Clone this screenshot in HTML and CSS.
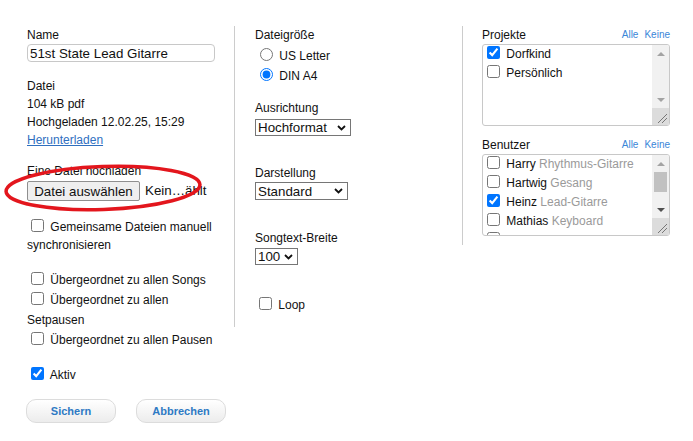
FILE: index.html
```html
<!DOCTYPE html>
<html lang="de">
<head>
    <meta charset="UTF-8">
    <meta name="viewport" content="width=device-width, initial-scale=1.0">
    <title>Datei bearbeiten</title>
    <link rel="stylesheet" href="styles.css">
</head>
<body>
    <div class="page">
        <div class="columns">
            <!-- Datei -->
            <div class="col col-main">
                <div class="label">Name</div>
                <input type="text" class="name-input" value="51st State Lead Gitarre">

                <div class="file-info">
                    <div>Datei</div>
                    <div>104 kB pdf</div>
                    <div>Hochgeladen 12.02.25, 15:29</div>
                    <div><a href="#" class="link">Herunterladen</a></div>
                </div>

                <div class="upload">
                    <div class="label">Eine Datei hochladen</div>
                    <div class="file-row">
                        <button class="file-btn">Datei auswählen</button>
                        <span class="file-name">Kein…ählt</span>
                    </div>
                    <svg class="mark" width="215" height="55" viewBox="0 0 215 55">
                        <ellipse cx="103" cy="28" rx="97" ry="21.5" transform="rotate(-2 103 28)" fill="none" stroke="#e3161d" stroke-width="3.5"/>
                    </svg>
                </div>

                <label class="check-row sync"><input type="checkbox"> Gemeinsame Dateien manuell synchronisieren</label>

                <div class="parent-group">
                    <label class="check-row wide"><input type="checkbox"> Übergeordnet zu allen Songs</label>
                    <label class="check-row wide"><input type="checkbox"> Übergeordnet zu allen Setpausen</label>
                    <label class="check-row wide"><input type="checkbox"> Übergeordnet zu allen Pausen</label>
                </div>
            </div>

            <!-- Druck -->
            <div class="col col-print">
                <div class="label">Dateigröße</div>
                <div class="radios">
                    <label class="radio-row"><input type="radio" name="size"> US Letter</label>
                    <label class="radio-row"><input type="radio" name="size" checked> DIN A4</label>
                </div>

                <div class="label field-gap-1">Ausrichtung</div>
                <div class="sel-wrap sel-orient">
                    <select class="sel">
                        <option>Hochformat</option>
                        <option>Querformat</option>
                    </select>
                    <svg class="chevron" width="9" height="6" viewBox="0 0 9 6"><path d="M1 1 L4.5 4.5 L8 1" fill="none" stroke="#111" stroke-width="1.8"/></svg>
                </div>

                <div class="label field-gap-2">Darstellung</div>
                <div class="sel-wrap sel-view">
                    <select class="sel">
                        <option>Standard</option>
                        <option>Kompakt</option>
                    </select>
                    <svg class="chevron" width="9" height="6" viewBox="0 0 9 6"><path d="M1 1 L4.5 4.5 L8 1" fill="none" stroke="#111" stroke-width="1.8"/></svg>
                </div>

                <div class="label field-gap-3">Songtext-Breite</div>
                <div class="sel-wrap sel-width">
                    <select class="sel">
                        <option>100</option>
                        <option>80</option>
                    </select>
                    <svg class="chevron" width="9" height="6" viewBox="0 0 9 6"><path d="M1 1 L4.5 4.5 L8 1" fill="none" stroke="#111" stroke-width="1.8"/></svg>
                </div>

                <label class="check-row wide loop"><input type="checkbox"> Loop</label>
            </div>

            <!-- Zuordnung -->
            <div class="col col-assign">
                <div class="list-head">
                    <span>Projekte</span>
                    <span class="quick"><a href="#">Alle</a><a href="#">Keine</a></span>
                </div>
                <div class="list-box">
                    <div class="list">
                        <label class="list-item"><input type="checkbox" checked> Dorfkind</label>
                        <label class="list-item"><input type="checkbox"> Persönlich</label>
                    </div>
                    <div class="scrollbar">
                        <div class="sb-btn"><span class="arrow-up"></span></div>
                        <div class="sb-track"></div>
                        <div class="sb-btn"><span class="arrow-down"></span></div>
                        <div class="sb-corner">
                            <svg width="17" height="17" viewBox="0 0 17 17">
                                <path d="M6 15 L15 6 M10 15 L15 10" stroke="#777" stroke-width="1" fill="none"/>
                            </svg>
                        </div>
                    </div>
                </div>

                <div class="list-head users-head">
                    <span>Benutzer</span>
                    <span class="quick"><a href="#">Alle</a><a href="#">Keine</a></span>
                </div>
                <div class="list-box">
                    <div class="list">
                        <label class="list-item"><input type="checkbox"> Harry <span class="role">Rhythmus-Gitarre</span></label>
                        <label class="list-item"><input type="checkbox"> Hartwig <span class="role">Gesang</span></label>
                        <label class="list-item"><input type="checkbox" checked> Heinz <span class="role">Lead-Gitarre</span></label>
                        <label class="list-item"><input type="checkbox"> Mathias <span class="role">Keyboard</span></label>
                        <label class="list-item"><input type="checkbox"></label>
                    </div>
                    <div class="scrollbar">
                        <div class="sb-btn"><span class="arrow-up"></span></div>
                        <div class="sb-track"><div class="sb-thumb"></div></div>
                        <div class="sb-btn"><span class="arrow-down dark"></span></div>
                        <div class="sb-corner">
                            <svg width="17" height="17" viewBox="0 0 17 17">
                                <path d="M6 15 L15 6 M10 15 L15 10" stroke="#777" stroke-width="1" fill="none"/>
                            </svg>
                        </div>
                    </div>
                </div>
            </div>
        </div>

        <div class="footer">
            <label class="check-row wide"><input type="checkbox" checked> Aktiv</label>
            <div class="actions">
                <button class="btn">Sichern</button>
                <button class="btn">Abbrechen</button>
            </div>
        </div>
    </div>
</body>
</html>
```

FILE: styles.css
```css
body {
    margin: 0;
    padding: 0;
    background-color: #fff;
    font-family: "Liberation Sans", Arial, sans-serif;
    font-size: 12px;
    line-height: 18px;
    color: #111;
}
.page {
    padding: 26px 0 0 27px;
}
.columns {
    display: flex;
    align-items: flex-start;
}
.col-main {
    width: 188px;
    padding-right: 19px;
}
.col-print {
    width: 187px;
    padding: 0 20px 12px 20px;
    border-left: 1px solid #ccc;
}
.col-assign {
    width: 188px;
    padding: 0 0 9px 19px;
    border-left: 1px solid #ccc;
}
.label {
    height: 18px;
}

/* linke Spalte */
.name-input {
    display: block;
    box-sizing: border-box;
    width: 188px;
    height: 18px;
    margin: 0;
    padding: 0 2px;
    border: 1px solid #c8c8c8;
    border-radius: 4px;
    font-family: "Liberation Sans", Arial, sans-serif;
    font-size: 13.33px;
    color: #111;
}
.file-info {
    margin-top: 15px;
}
.link {
    color: #2f6fbf;
}
.upload {
    position: relative;
    margin-top: 13px;
}
.file-row {
    display: flex;
    align-items: center;
    height: 20px;
    margin-top: 1px;
}
.file-btn {
    box-sizing: border-box;
    width: 113px;
    height: 20px;
    margin: 0;
    padding: 0;
    border: 1px solid #8f8f8f;
    border-radius: 2px;
    background-color: #efefef;
    font-family: "Liberation Sans", Arial, sans-serif;
    font-size: 13.33px;
    color: #111;
}
.file-name {
    margin-left: 5px;
    font-size: 13.33px;
}
.mark {
    position: absolute;
    left: -27px;
    top: -2px;
}
.check-row {
    display: block;
}
.check-row input[type="checkbox"],
.list-item input[type="checkbox"] {
    margin: 0 3px 0 4px;
    vertical-align: -1px;
}
.sync {
    margin-top: 17px;
}
.parent-group {
    margin-top: 16px;
}
.wide {
    line-height: 20px;
}

/* mittlere Spalte */
.radios {
    margin-top: 2px;
}
.radio-row {
    display: block;
    line-height: 20px;
}
.radio-row input {
    margin: 0 3px 0 5px;
    vertical-align: -1px;
}
.field-gap-1 {
    margin-top: 13px;
}
.field-gap-2 {
    margin-top: 28px;
}
.field-gap-3 {
    margin-top: 29px;
}
.sel-wrap {
    position: relative;
}
.sel {
    display: block;
    box-sizing: border-box;
    width: 100%;
    height: 17px;
    margin: 0;
    padding: 0 0 0 2px;
    border: 1px solid #767676;
    border-radius: 0;
    background-color: #fff;
    appearance: none;
    -webkit-appearance: none;
    font-family: "Liberation Sans", Arial, sans-serif;
    font-size: 13.33px;
    line-height: 15px;
    color: #111;
}
.chevron {
    position: absolute;
    right: 5px;
    top: 6px;
    pointer-events: none;
}
.sel-orient {
    width: 96px;
    margin-top: 2px;
}
.sel-view {
    width: 93px;
    margin-top: 0;
}
.sel-view .sel {
    height: 18px;
}
.sel-width {
    width: 43px;
    margin-top: 1px;
}
.loop {
    margin-top: 30px;
}

/* rechte Spalte */
.list-head {
    display: flex;
    justify-content: space-between;
    align-items: center;
    height: 18px;
}
.users-head {
    margin-top: 10px;
}
.quick {
    font-size: 10px;
}
.quick a {
    margin-left: 6px;
    color: #3a86d8;
    text-decoration: none;
}
.list-box {
    box-sizing: border-box;
    display: flex;
    height: 82px;
    border: 1px solid #c8c8c8;
    border-radius: 3px;
    overflow: hidden;
}
.list {
    flex: 1;
    overflow: hidden;
}
.list-item {
    display: block;
    line-height: 19px;
    white-space: nowrap;
}
.role {
    color: #9a9a9a;
}
.scrollbar {
    display: flex;
    flex-direction: column;
    width: 17px;
    background-color: #f1f1f1;
}
.sb-btn {
    display: flex;
    align-items: center;
    justify-content: center;
    height: 17px;
}
.sb-track {
    flex: 1;
}
.sb-thumb {
    height: 20px;
    margin: 0 2px;
    background-color: #c1c1c1;
}
.arrow-up {
    width: 0;
    height: 0;
    border-left: 4px solid transparent;
    border-right: 4px solid transparent;
    border-bottom: 4px solid #a3a3a3;
}
.arrow-down {
    width: 0;
    height: 0;
    border-left: 4px solid transparent;
    border-right: 4px solid transparent;
    border-top: 4px solid #a3a3a3;
}
.arrow-down.dark {
    border-top-color: #505050;
}
.sb-corner {
    height: 17px;
    background-color: #dcdcdc;
}
.sb-corner svg {
    display: block;
}

/* Fußzeile */
.footer {
    margin-top: 15px;
}
.actions {
    display: flex;
    gap: 20px;
    margin: 14px 0 0 -1px;
}
.btn {
    box-sizing: border-box;
    width: 90px;
    height: 24px;
    padding: 0;
    border: 1px solid #dcdcdc;
    border-radius: 10px;
    background: linear-gradient(#ffffff, #ececec);
    font-family: "Liberation Sans", Arial, sans-serif;
    font-size: 11px;
    font-weight: bold;
    color: #2e7ac4;
    cursor: pointer;
}
```
